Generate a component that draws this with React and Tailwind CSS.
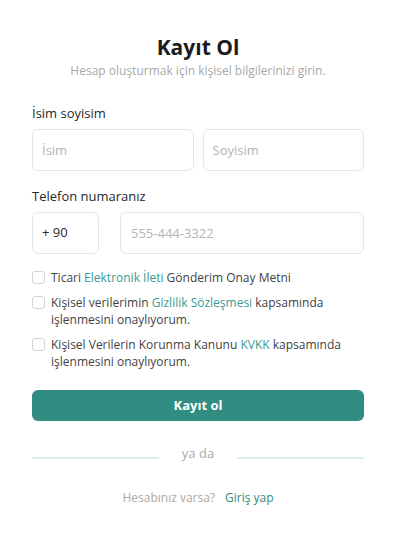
import { useState } from "react";

function Checkbox({ children }) {
  return (
    <label className="flex items-start gap-[6px] text-[12px] leading-[17px] text-[#3f3f46]">
      <span className="mt-[2px] w-[13px] h-[13px] shrink-0 rounded-[3px] border border-[#d4d4d8] bg-white" />
      <span>{children}</span>
    </label>
  );
}

export default function App() {
  const [name, setName] = useState("");

  return (
    <div
      className="min-h-[539px] bg-white flex justify-center"
      style={{ fontFamily: '"Open Sans", "Lato", sans-serif' }}
    >
      <div className="w-[401px] rounded-2xl bg-white pl-8 pr-[37px] pt-[33px] pb-8">
        <div className="text-center">
          <h1 className="text-[21px] leading-[28px] font-bold text-[#1c1c1c]">Kayıt Ol</h1>
          <p className="text-[12px] leading-[18px] text-[#a8a8a8] mt-[1px]">
            Hesap oluşturmak için kişisel bilgilerinizi girin.
          </p>
        </div>

        <div className="mt-[24px]">
          <p className="text-[13px] leading-[18px] text-[#27272a]">İsim soyisim</p>
          <div className="mt-[7px] grid grid-cols-2 gap-[9px]">
            <input
              value={name}
              onChange={(e) => setName(e.target.value)}
              placeholder="İsim"
              className="h-[42px] min-w-0 rounded-[6px] border border-[#e6e6e6] px-[9px] text-[13px] placeholder:text-[#b4b4b4] outline-none"
            />
            <input
              placeholder="Soyisim"
              className="h-[42px] min-w-0 rounded-[6px] border border-[#e6e6e6] px-[9px] text-[13px] placeholder:text-[#b4b4b4] outline-none"
            />
          </div>
        </div>

        <div className="mt-[16px]">
          <p className="text-[13px] leading-[18px] text-[#27272a]">Telefon numaranız</p>
          <div className="mt-[7px] flex gap-[21px]">
            <div className="w-[67px] h-[42px] rounded-[6px] border border-[#e6e6e6] px-[9px] flex items-center text-[13px] text-[#27272a]">
              + 90
            </div>
            <input
              placeholder="555-444-3322"
              className="flex-1 min-w-0 h-[42px] rounded-[6px] border border-[#e6e6e6] px-[10px] text-[13px] placeholder:text-[#b4b4b4] outline-none"
            />
          </div>
        </div>

        <div className="mt-[15px] flex flex-col gap-[8px]">
          <Checkbox>
            Ticari <span className="text-[#3a9a8f]">Elektronik İleti</span> Gönderim Onay Metni
          </Checkbox>
          <Checkbox>
            Kişisel verilerimin <span className="text-[#3a9a8f]">Gizlilik Sözleşmesi</span> kapsamında
            işlenmesini onaylıyorum.
          </Checkbox>
          <Checkbox>
            Kişisel Verilerin Korunma Kanunu <span className="text-[#3a9a8f]">KVKK</span> kapsamında
            işlenmesini onaylıyorum.
          </Checkbox>
        </div>

        <button className="mt-[20px] w-full h-[31px] rounded-[6px] bg-[#318c82] text-white text-[13px] font-bold">
          Kayıt ol
        </button>

        <div className="mt-[32px] flex items-center">
          <div className="flex-1 h-[2px] bg-[#dcefeb]" />
          <span className="w-[78px] text-center text-[13px] text-[#a8a8a8] -mt-[9px]">ya da</span>
          <div className="flex-1 h-[2px] bg-[#dcefeb]" />
        </div>

        <p className="mt-[25px] text-center text-[12px] text-[#b0a8a4]">
          Hesabınız varsa?<span className="ml-[10px] text-[#2f8a80]">Giriş yap</span>
        </p>
      </div>
    </div>
  );
}
